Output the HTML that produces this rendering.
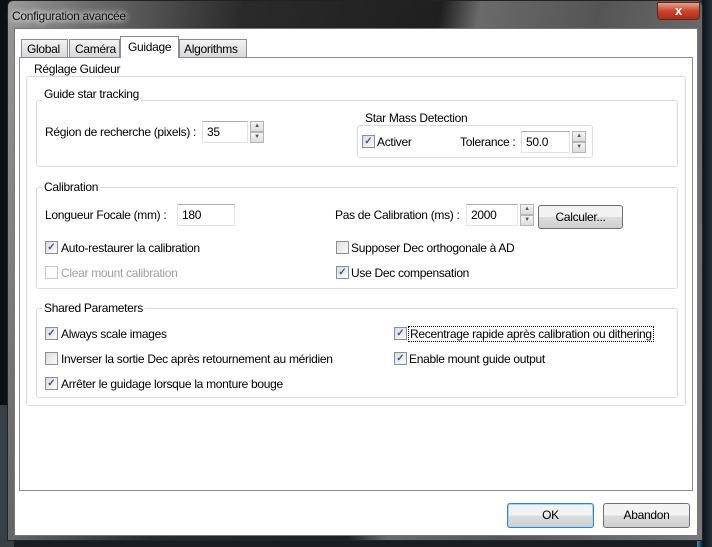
<!DOCTYPE html>
<html><head><meta charset="utf-8"><style>
*{margin:0;padding:0;box-sizing:border-box}
body{width:712px;height:547px;overflow:hidden;background:#1a1e22;font-family:"Liberation Sans",sans-serif;font-size:12px;letter-spacing:-0.3px;color:#000;position:relative}
.a{position:absolute}
.t{position:absolute;white-space:nowrap;line-height:14px}
.g{position:absolute;border:1px solid #dadde0;border-radius:3px}
.gl{position:absolute;background:#fff;padding:0 2px;white-space:nowrap;line-height:14px}
.in{position:absolute;border:1px solid #e2e3ea;border-top-color:#abadb3;background:#fff;padding:3px 0 0 4px;height:22px}
.sp{position:absolute;width:14px;height:22px}
.sp div{height:11px;border:1px solid #b5b5b5;background:linear-gradient(#f4f4f4,#dcdcdc);font-size:6px;text-align:center;line-height:9px;color:#555}
.cb{position:absolute;width:13px;height:13px;border:1px solid #8f8f8f;background:linear-gradient(135deg,#dcdcdc,#fbfbfb);font-size:10px;line-height:11px;text-align:center;color:#3a5a9a;font-weight:bold;letter-spacing:0}
.btn{position:absolute;border:1px solid #707070;border-radius:3px;background:linear-gradient(#f2f2f2 50%,#dddddd 50%,#cfcfcf);text-align:center;line-height:22px}
</style></head><body>
<div class="a" style="left:0;top:405px;width:14px;height:142px;background:#3a3f44"></div>
<div class="a" style="left:0;top:0;width:12px;height:405px;background:#0d1013"></div>
<div class="a" style="left:697px;top:0;width:15px;height:547px;background:linear-gradient(90deg,#3d8ab0,#0b1620 40%,#2a2f33)"></div>
<div class="a" style="left:7px;top:0;width:696px;height:541px;border-radius:6px 6px 0 0;background:linear-gradient(100deg,#9a9a9a 0%,#6e6e6e 10%,#2a2a2a 30%,#1f1f1f 55%,#6a6a6a 60%,#555 75%,#7a7a7a 100%);border:1px solid #222"></div>
<div class="t" style="left:12px;top:9px;font-size:12px;color:#111;text-shadow:0 0 6px #fff,0 0 8px #fff">Configuration avancée</div>
<div class="a" style="left:657px;top:2px;width:43px;height:18px;border:1px solid #5a2a20;border-radius:0 0 4px 4px;background:linear-gradient(#e8a08c,#c9452c 50%,#b02a14);color:#fff;text-align:center;font-weight:bold;font-size:13px;line-height:16px">x</div>
<div class="a" style="left:14px;top:28px;width:684px;height:508px;background:#fff;border:1px solid #777"></div>
<div class="a" style="left:19px;top:57px;width:674px;height:434px;border:1px solid #898c95;background:#fff"></div>
<div class="a t" style="left:21px;top:39px;width:47px;height:19px;border:1px solid #898c95;background:linear-gradient(#f2f2f2,#d8d8d8);padding:2px 0 0 5px">Global</div>
<div class="a t" style="left:69px;top:39px;width:51px;height:19px;border:1px solid #898c95;background:linear-gradient(#f2f2f2,#d8d8d8);padding:2px 0 0 5px">Caméra</div>
<div class="a t" style="left:120px;top:36px;width:59px;height:22px;border:1px solid #898c95;border-bottom:none;background:#fff;padding:3px 0 0 7px">Guidage</div>
<div class="a t" style="left:179px;top:39px;width:68px;height:19px;border:1px solid #898c95;background:linear-gradient(#f2f2f2,#d8d8d8);padding:2px 0 0 4px">Algorithms</div>
<div class="g" style="left:26px;top:76px;width:660px;height:330px"></div>
<div class="gl" style="left:32px;top:62px">Réglage Guideur</div>
<div class="g" style="left:36px;top:100px;width:642px;height:67px"></div>
<div class="gl" style="left:42px;top:87px">Guide star tracking</div>
<div class="t" style="left:45px;top:125px">Région de recherche (pixels) :</div>
<div class="in" style="left:202px;top:121px;width:46px">35</div>
<div class="sp" style="left:250px;top:121px"><div>▲</div><div>▼</div></div>
<div class="g" style="left:357px;top:125px;width:236px;height:33px"></div>
<div class="gl" style="left:363px;top:111px">Star Mass Detection</div>
<div class="cb" style="left:362px;top:135px">✓</div>
<div class="t" style="left:377px;top:135px">Activer</div>
<div class="t" style="left:460px;top:135px">Tolerance :</div>
<div class="in" style="left:521px;top:131px;width:49px">50.0</div>
<div class="sp" style="left:572px;top:131px"><div>▲</div><div>▼</div></div>
<div class="g" style="left:36px;top:187px;width:642px;height:102px"></div>
<div class="gl" style="left:42px;top:180px">Calibration</div>
<div class="t" style="left:45px;top:208px">Longueur Focale (mm) :</div>
<div class="in" style="left:177px;top:204px;width:58px">180</div>
<div class="t" style="left:335px;top:208px">Pas de Calibration (ms) :</div>
<div class="in" style="left:466px;top:204px;width:52px">2000</div>
<div class="sp" style="left:520px;top:204px"><div>▲</div><div>▼</div></div>
<div class="btn" style="left:538px;top:205px;width:85px;height:24px">Calculer...</div>
<div class="cb" style="left:45px;top:241px">✓</div>
<div class="t" style="left:61px;top:241px">Auto-restaurer la calibration</div>
<div class="cb" style="left:45px;top:266px;border-color:#c8c8c8;background:#fff"></div>
<div class="t" style="left:61px;top:266px;color:#a0a0a0">Clear mount calibration</div>
<div class="cb" style="left:336px;top:241px"></div>
<div class="t" style="left:351px;top:241px">Supposer Dec orthogonale à AD</div>
<div class="cb" style="left:336px;top:266px">✓</div>
<div class="t" style="left:351px;top:266px">Use Dec compensation</div>
<div class="g" style="left:36px;top:308px;width:642px;height:90px"></div>
<div class="gl" style="left:42px;top:301px">Shared Parameters</div>
<div class="cb" style="left:45px;top:327px">✓</div>
<div class="t" style="left:61px;top:327px">Always scale images</div>
<div class="cb" style="left:45px;top:352px"></div>
<div class="t" style="left:61px;top:352px">Inverser la sortie Dec après retournement au méridien</div>
<div class="cb" style="left:45px;top:377px">✓</div>
<div class="t" style="left:61px;top:377px">Arrêter le guidage lorsque la monture bouge</div>
<div class="cb" style="left:394px;top:327px">✓</div>
<div class="t" style="left:408px;top:326px;border:1px dotted #000;padding:0 1px">Recentrage rapide après calibration ou dithering</div>
<div class="cb" style="left:394px;top:352px">✓</div>
<div class="t" style="left:409px;top:352px">Enable mount guide output</div>
<div class="btn" style="left:507px;top:503px;width:87px;height:25px;border-color:#3c7fb1;box-shadow:inset 0 0 0 1px #9fdcf5">OK</div>
<div class="btn" style="left:603px;top:503px;width:87px;height:25px">Abandon</div>
</body></html>
